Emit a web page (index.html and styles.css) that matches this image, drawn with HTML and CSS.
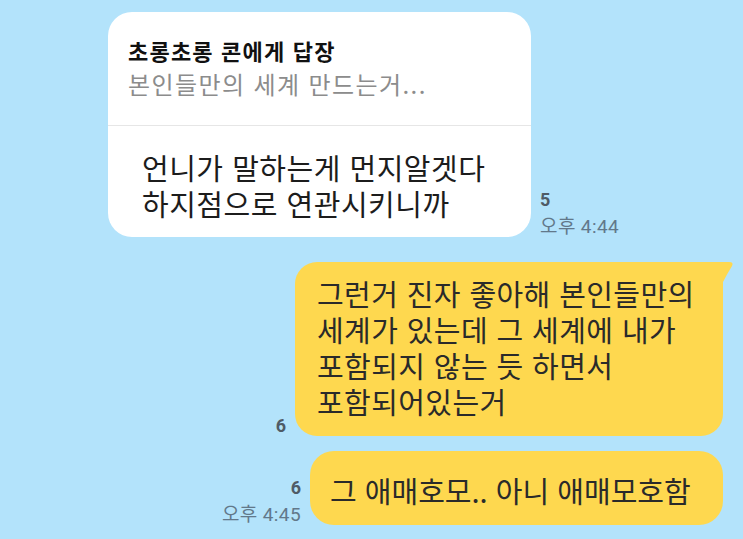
FILE: index.html
```html
<!DOCTYPE html>
<html lang="ko">
<head>
    <meta charset="UTF-8">
    <meta name="viewport" content="width=device-width, initial-scale=1.0">
    <title>채팅</title>
    <link rel="stylesheet" href="styles.css">
</head>
<body>
    <div class="chat">
        <div class="row received">
            <div class="bubble reply-bubble">
                <div class="reply-head">
                    <div class="reply-title">초롱초롱 콘에게 답장</div>
                    <div class="reply-quote">본인들만의 세계 만드는거...</div>
                </div>
                <div class="reply-body">언니가 말하는게 먼지알겟다<br>하지점으로 연관시키니까</div>
            </div>
            <div class="meta">
                <div class="count">5</div>
                <div class="time">오후 4:44</div>
            </div>
        </div>

        <div class="row sent first">
            <div class="meta">
                <div class="count">6</div>
            </div>
            <div class="bubble mine tail long">그런거 진자 좋아해 본인들만의<br>세계가 있는데 그 세계에 내가<br>포함되지 않는 듯 하면서<br>포함되어있는거</div>
        </div>

        <div class="row sent">
            <div class="meta">
                <div class="count">6</div>
                <div class="time">오후 4:45</div>
            </div>
            <div class="bubble mine short">그 애매호모.. 아니 애매모호함</div>
        </div>
    </div>
</body>
</html>
```

FILE: styles.css
```css
body {
    margin: 0;
    background-color: #b3e3fb;
    font-family: "Noto Sans CJK KR", sans-serif;
    color: #1c1c1c;
}
.chat {
    display: flex;
    flex-direction: column;
    padding-top: 12px;
}
.row {
    display: flex;
    align-items: flex-end;
    gap: 9px;
}
.received {
    padding-left: 108px;
}
.sent {
    justify-content: flex-end;
    padding-right: 20px;
    margin-top: 15px;
}
.sent.first {
    margin-top: 25px;
}
.sent .meta {
    text-align: right;
}
.bubble {
    box-sizing: border-box;
    font-size: 29px;
    line-height: 36px;
}
.reply-bubble {
    width: 423px;
    background-color: #fff;
    border-radius: 24px;
}
.reply-head {
    padding: 25px 20px 24px;
    border-bottom: 1px solid #e6e6e6;
}
.reply-title {
    font-size: 22px;
    font-weight: bold;
    line-height: 26px;
    letter-spacing: 1.2px;
    color: #111;
}
.reply-quote {
    margin-top: 4px;
    font-size: 24px;
    line-height: 34px;
    letter-spacing: 1.4px;
    color: #8c8c8c;
}
.reply-body {
    padding: 23px 20px 16px 34px;
    letter-spacing: 0.5px;
}
.mine {
    position: relative;
    background-color: #fed84f;
    border-radius: 22px;
    color: #2a2a2a;
    letter-spacing: 0.4px;
}
.mine.long {
    width: 428px;
    padding: 13px 20px 17px 22px;
}
.mine.short {
    width: 413px;
    padding: 21px 20px 17px 20px;
    border-radius: 24px;
    letter-spacing: 0;
}
.tail {
    border-top-right-radius: 0;
}
.tail::after {
    content: "";
    position: absolute;
    top: 0;
    right: -11px;
    width: 14px;
    height: 20px;
    background-color: #fed84f;
    clip-path: path("M0 0 H9 Q14 0 12 4 Q7 12 3 20 L0 20 Z");
}
.meta {
    margin-bottom: -2px;
    font-family: Roboto, "Noto Sans CJK KR", sans-serif;
    font-size: 19px;
    line-height: 24px;
    white-space: nowrap;
}
.count {
    font-size: 18px;
    font-weight: bold;
    color: #4f5b66;
}
.time {
    margin-top: 3px;
    color: #62788a;
    letter-spacing: 0.4px;
}
```
